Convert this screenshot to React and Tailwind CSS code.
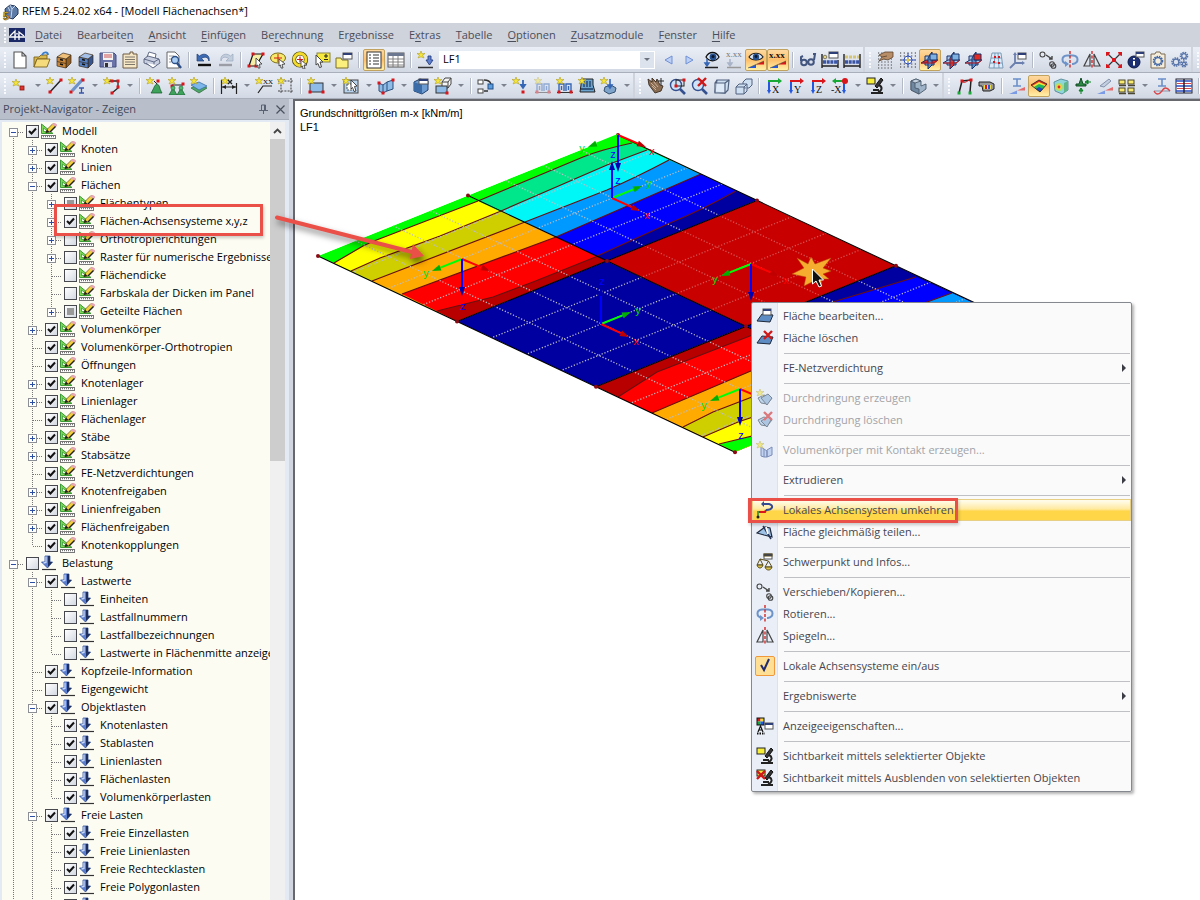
import { useState } from "react";

/* ---------- small drawing parts shared by the icons ---------- */

const Spark = ({ x = 4, y = 4 }) => (
  <g transform={`translate(${x} ${y})`}>
    <path d="M0-4L1-1.2L4-1.6L1.6.4L3 3L0 1.8L-3 3L-1.6.4L-4-1.6L-1-1.2Z" fill="#f4e63c" stroke="#b39d1c" strokeWidth=".6" />
  </g>
);

const Win = ({ x = 9, y = 1, w = 8, h = 6 }) => (
  <g>
    <rect x={x} y={y} width={w} height={h} fill="#fff" stroke="#555" strokeWidth="1" />
    <rect x={x} y={y} width={w} height="2" fill="#2f3f78" />
  </g>
);

const Dot = ({ x, y, c = "#d8161b" }) => <rect x={x - 1.5} y={y - 1.5} width="3" height="3" fill={c} />;

const Slab = () => <path d="M1 14L6 7L17 8L14 15Z" fill="#5d8cc4" stroke="#1f2a3c" strokeWidth="1" />;

const Gear = ({ x, y, r = 3, c = "#5572a8" }) => (
  <g fill="none" stroke={c}>
    <circle cx={x} cy={y} r={r} strokeWidth="1.6" strokeDasharray="1.5 .9" />
    <circle cx={x} cy={y} r={r - 1.2} strokeWidth="1.2" />
  </g>
);

const Planes = ({ hot }) => (
  <g stroke="#16306b" strokeWidth="1">
    <path d="M4 5H13V14H4Z" fill="#a9c9ea" />
    <path d="M0 12L5 9H17L13 12Z" fill={hot === "h" ? "#e22a22" : "#a9c9ea"} />
    <path d="M7 7L11 1V14L7 18Z" fill={hot === "s" ? "#e22a22" : "#4d88c9"} fillOpacity=".85" />
    <path d="M9 3H16V9H9Z" fill={hot === "v" ? "#e22a22" : "#7fb0e2"} />
    <path d="M0 12H13L17 9" stroke="#c81a1a" fill="none" />
  </g>
);

const Axis = ({ letter, flip }) => (
  <g>
    <path d={flip ? "M13 3V15" : "M4 3V15"} stroke="#2458e0" strokeWidth="2" />
    <path d={flip ? "M11 13L13 17L15 13Z" : "M2 13L4 17L6 13Z"} fill="#2458e0" />
    <path d="M3 4H15" stroke={flip || letter === "X" ? "#18a835" : "#d8161b"} strokeWidth="2" />
    <path d={flip ? "M5 1L1 4L5 7Z" : "M13 1L17 4L13 7Z"} fill={flip || letter === "X" ? "#18a835" : "#d8161b"} />
    {flip && <circle cx="14" cy="4" r="3" fill="#d8161b" />}
    <text x={flip ? 0 : 7} y="16" fontSize="10" fontFamily="Liberation Serif, serif" fill="#111">
      {flip ? "-X" : letter}
    </text>
  </g>
);

const Cabinet = ({ c, d, top }) => (
  <g stroke="#3b2a18" strokeWidth=".7">
    <path d="M11 8L16 4V12L11 17Z" fill={d} />
    <path d="M2 6L11 8V17L2 15Z" fill={c} />
    <path d="M2 6L8 2L16 4L11 8Z" fill={top} />
    <path d="M2 10.500L11 12.500" />
    <path d="M5 8.500L8 9.200M5 13L8 13.700" stroke="#111" strokeWidth="1.600" />
  </g>
);

const Scope = () => (
  <g>
    <rect x="1" y="1" width="8" height="6" fill="#f7ee3a" stroke="#222" />
    <path d="M15 1L9 9L11 11L17 3Z" fill="#333" stroke="#111" />
    <path d="M13 8C17 10 16 14 12 15M5 16H17M7 13H13" fill="none" stroke="#222" strokeWidth="2" />
  </g>
);

const LoadBlock = () => (
  <g>
    <path d="M3 14V7H8V14M10 14V7H15V14" fill="none" stroke="#3565b5" strokeWidth="1.4" />
    <path d="M5.500 9V13M12.500 9V13" stroke="#3565b5" strokeWidth="1.4" />
    <path d="M1 15.500H17" stroke="#333" />
    <Dot x={3} y={15} />
    <Dot x={15} y={15} />
    <Spark />
  </g>
);

const Cross = ({ x = 13, y = 5 }) => (
  <path d={`M${x - 4} ${y - 4}L${x + 4} ${y + 4}M${x + 4} ${y - 4}L${x - 4} ${y + 4}`} stroke="#d01818" strokeWidth="2.400" />
);

const Pyramid = ({ x, y }) => (
  <g>
    <path d={`M${x} ${y}L${x + 4} ${y + 7}H${x - 4}Z`} fill="#3da35a" stroke="#1d5f33" strokeWidth=".7" />
    <circle cx={x} cy={y} r="2" fill="#4fba6c" stroke="#1d5f33" strokeWidth=".6" />
  </g>
);

const icons = {
  newDoc: <path d="M3 1H11L15 5V17H3ZM11 1V5H15" fill="#fff" stroke="#555" strokeWidth="1.100" />,
  open: (
    <g stroke="#7a6320" strokeWidth=".9">
      <path d="M1 6H6L8 4H14V8H4L1 16Z" fill="#d9b84a" />
      <path d="M4 8H17L14 16H1Z" fill="#f6db7c" />
      <path d="M9 4C11 0 15 1 15 4" fill="none" stroke="#3a7ecb" strokeWidth="1.800" />
    </g>
  ),
  cabinetBrown: <Cabinet c="#c8873a" d="#8f5f24" top="#eec079" />,
  cabinetBlue: <Cabinet c="#5580c4" d="#345591" top="#a3bfe8" />,
  save: (
    <g>
      <path d="M1 2H15L17 4V16H1Z" fill="#6b74a8" stroke="#474e80" />
      <rect x="4" y="2" width="10" height="7" fill="#f3f3f3" />
      <path d="M5 4H13M5 6H13" stroke="#c44" strokeWidth=".9" />
      <rect x="5" y="11" width="8" height="5" fill="#d9dce8" />
      <rect x="6" y="12" width="3" height="4" fill="#333" />
    </g>
  ),
  list: (
    <g>
      <path d="M2 3H9V1H12V3H16V17H2Z" fill="#f5e6c6" stroke="#6d5b43" />
      <path d="M4 6H14M4 8.500H14M4 11H14M4 13.500H14" stroke="#6f6a60" strokeWidth=".9" />
    </g>
  ),
  print: (
    <g stroke="#555f7a" strokeWidth=".9">
      <path d="M4 6L6 1L13 3L12 8Z" fill="#fff" />
      <path d="M1 8L5 5L16 8L17 12L11 16L1 12Z" fill="#c8cfe0" />
      <path d="M1 8L11 11L16 8M11 11V16" fill="none" />
      <path d="M3 12L10 17L14 14" fill="#fff" />
    </g>
  ),
  preview: (
    <g>
      <path d="M2 1H10L14 5V17H2Z" fill="#fff" stroke="#666" />
      <path d="M4 5H9M4 8H6M4 11H6" stroke="#999" />
      <circle cx="10" cy="9" r="3.500" fill="#a9cdf3" stroke="#2b4f86" strokeWidth="1.300" />
      <path d="M12 12L16 17" stroke="#2b4f86" strokeWidth="2.400" />
    </g>
  ),
  undo: (
    <g>
      <path d="M2 3V10H9L6.500 7.500C10 5 13 6 14 10C15.500 4 9 1 4.500 5Z" fill="#3d6bb4" stroke="#203f77" strokeWidth=".7" />
      <path d="M3 14H16" stroke="#111" strokeWidth="2.400" />
    </g>
  ),
  redo: (
    <g>
      <path d="M16 3V10H9L11.500 7.500C8 5 5 6 4 10C2.500 4 9 1 13.500 5Z" fill="#c3cedd" stroke="#9aa9be" strokeWidth=".7" />
      <path d="M2 14H15" stroke="#9a9da5" strokeWidth="2.400" />
    </g>
  ),
  selPoly: (
    <g>
      <path d="M2 15L6 3H16L9 15Z" fill="#f5efa8" stroke="#111" strokeWidth="1.200" />
      <Dot x={6} y={3} />
      <Dot x={2} y={15} />
      <Dot x={16} y={3} />
      <Dot x={9} y={15} />
      <path d="M9 7L15 13L12.500 13L13 17L11 17L11 14L9 15Z" stroke="#444" fill="#fff" strokeWidth=".9" />
    </g>
  ),
  selEllipse: (
    <g>
      <ellipse cx="9" cy="7" rx="7.500" ry="5" fill="#f7e96b" stroke="#7a6a13" />
      <path d="M5 7H13M9 3V11" stroke="#d01818" />
      <path d="M10 8L16 13L13 13.500L14 17L12 17L11.500 14L10 15Z" fill="#fff" stroke="#444" strokeWidth=".9" />
    </g>
  ),
  selRing: (
    <g>
      <circle cx="9" cy="8.500" r="6" fill="#fff" stroke="#4a420c" strokeWidth="4.200" />
      <circle cx="9" cy="8.500" r="6" fill="none" stroke="#f3dc2d" strokeWidth="2.800" />
      <path d="M6 8.500H12M9 5.500V11.500" stroke="#d01818" strokeWidth="1.200" />
      <path d="M10 9L16 14L13 14L14 18L12 18L11.500 15L10 16Z" fill="#fff" stroke="#444" strokeWidth=".9" />
    </g>
  ),
  selWin: (
    <g>
      <rect x="4" y="2" width="13" height="9" fill="#f7ea3f" stroke="#8a8544" />
      <path d="M13 3V7M11 5H15M11 8.500H15" stroke="#222" />
      <path d="M3 4L10 11L7 11L8.500 16L6.500 16.500L5 12.500L3 14Z" fill="#fff" stroke="#444" />
    </g>
  ),
  folderWin: (
    <g>
      <path d="M1 7H6L7 9H13V17H1Z" fill="#fbf07e" stroke="#7b6f28" />
      <Win x={8} y={2} w={9} h={6} />
    </g>
  ),
  navTable: (
    <g>
      <rect x="2" y="1" width="14" height="16" fill="#fff" stroke="#333" />
      <path d="M4 4H6M8 4H14M4 7H6M8 7H14M4 10H6M8 10H14M4 13H6M8 13H14" stroke="#333" strokeWidth="1.200" />
    </g>
  ),
  grid: (
    <g>
      <rect x="1" y="2" width="16" height="14" fill="#fff" stroke="#555" />
      <rect x="1" y="2" width="16" height="3" fill="#6c7890" />
      <path d="M1 8H17M1 11H17M1 14H17M6 5V16M11 5V16" stroke="#777" strokeWidth=".9" />
    </g>
  ),
  newLoad: (
    <g>
      <Spark />
      <path d="M11 5H14V9H16L12.500 14L9 9H11Z" fill="#5f80cf" stroke="#27407f" strokeWidth=".9" />
      <path d="M1 16.500H16" stroke="#333" strokeWidth="1.500" />
    </g>
  ),
  prev: <path d="M13 5L6 9L13 13Z" fill="#bcd0f5" stroke="#6f90d6" />,
  next: <path d="M5 5L12 9L5 13Z" fill="#bcd0f5" stroke="#6f90d6" />,
  eyeLoad: (
    <g>
      <path d="M3 6C6 0 13 0 16 6C13 11 6 11 3 6Z" fill="#dbe8fa" stroke="#111" strokeWidth="1.300" />
      <circle cx="10" cy="6" r="3.400" fill="#24508f" />
      <circle cx="10" cy="5.500" r="1.500" fill="#0b1526" />
      <path d="M4 8V13M2 12L4 15L6 12Z" stroke="#3565b5" fill="#3565b5" strokeWidth="1.500" />
      <path d="M2 16.500H15" stroke="#222" strokeWidth="1.500" />
    </g>
  ),
  xxLoad: (
    <g>
      <text x="1" y="6" fontSize="9" fontFamily="Liberation Serif, serif" fill="#777">x.xx</text>
      <path d="M5 8V13M3 12L5 15L7 12Z" stroke="#a9b4c9" fill="#a9b4c9" strokeWidth="1.500" />
      <path d="M2 16.500H16" stroke="#999" strokeWidth="1.500" />
    </g>
  ),
  eyeRes: (
    <g>
      <path d="M2 6C5 1 13 1 16 6C13 10 5 10 2 6Z" fill="#dbe8fa" stroke="#222" strokeWidth="1.200" />
      <circle cx="9" cy="6" r="3.200" fill="#24508f" />
      <circle cx="9" cy="5.500" r="1.400" fill="#0b1526" />
      <path d="M1 17L9 13.500V17Z" fill="#2458e0" />
      <path d="M9 13.500L17 10V13.500Z" fill="#d8161b" />
      <path d="M1 17L17 10" stroke="#553" strokeWidth=".6" />
    </g>
  ),
  xxRes: (
    <g>
      <text x="0" y="7" fontSize="9" fontWeight="bold" fontFamily="Liberation Serif, serif" fill="#111">x.xx</text>
      <path d="M1 17L9 13.500V17Z" fill="#2458e0" />
      <path d="M9 13.500L17 10V13.500Z" fill="#d8161b" />
      <path d="M1 17L17 10" stroke="#553" strokeWidth=".6" />
    </g>
  ),
  glasses: (
    <g fill="none" stroke="#42557f" strokeWidth="2">
      <circle cx="5" cy="11.500" r="2.800" />
      <circle cx="12" cy="11" r="2.800" />
      <path d="M2 10L2 6L4 5M15 9L16 3L14 3M8 11H9" />
    </g>
  ),
  calcWin: (
    <g>
      <path d="M1 3V17M17 9V17M1 15H17" stroke="#222" strokeWidth="1.400" />
      <path d="M2 11H16" stroke="#3a55a8" strokeWidth="3.500" strokeDasharray="3 .7" />
      <circle cx="4" cy="6" r="1.800" fill="#e8d98a" stroke="#554" strokeWidth=".7" />
      <Win x={8} y={1} w={9} h={6} />
    </g>
  ),
  calc: (
    <g>
      <path d="M1 3V17M17 3V17M1 15H17" stroke="#222" strokeWidth="1.400" />
      <path d="M2 6H16" stroke="#d6c672" strokeWidth="3" strokeDasharray="3 1" />
      <path d="M2 11H16" stroke="#3a55a8" strokeWidth="3.500" strokeDasharray="3 .7" />
    </g>
  ),
  handGrid: (
    <g>
      <path d="M1 2H17M1 5H17M1 8H17M1 11H17M1 14H17M1 17H17" stroke="#444" strokeWidth="1.200" strokeDasharray="1.200 2" />
      <path d="M2 4L8 1L16 1V6L11 9L7 8L2 10L5 6Z" fill="#b88e68" stroke="#5a412b" strokeWidth=".8" />
      <path d="M5 6L10 5" stroke="#5a412b" strokeWidth=".8" />
    </g>
  ),
  snap: (
    <g>
      <path d="M1 2H17M1 5H17M1 13H17M1 16H17M1 9H17" stroke="#333" strokeWidth="1.200" strokeDasharray="1.200 2.500" />
      <circle cx="9" cy="9" r="4" fill="#fff" stroke="#3050b8" />
      <path d="M9 2V16M2 9H16" stroke="#3050b8" />
      <circle cx="9" cy="9" r="1.500" fill="#e6c92c" />
    </g>
  ),
  planeH: <Planes hot="h" />,
  planeS: <Planes hot="s" />,
  planeV: <Planes hot="v" />,
  meshRed: (
    <g>
      <path d="M2 17L5 2H14L16 17ZM3 12H15M4 7H15M8 2L7 17M11 2L12 17" fill="#dcebfa" stroke="#6f93b0" strokeWidth=".9" />
      <path d="M7 6H9M11 6H13M6 11H8M11 12H13" stroke="#d8161b" strokeWidth="2" />
    </g>
  ),
  axesWin: (
    <g>
      <path d="M6 3V12H14M6 12L1 17" fill="none" stroke="#6b7fae" strokeWidth="1.800" />
      <path d="M4 4L6 1L8 4ZM13 10L16 12L13 14Z" fill="#6b7fae" />
      <Win x={9} y={2} w={8} h={6} />
    </g>
  ),
  moveCopy: (
    <g fill="none" stroke="#444" strokeWidth="1.100">
      <circle cx="3.500" cy="3.500" r="2.500" />
      <path d="M7 4L13 8M13 5V8H10" strokeWidth="1.400" />
      <circle cx="13" cy="13" r="2.300" />
      <circle cx="14.500" cy="15" r="2.300" />
    </g>
  ),
  rotate: (
    <g>
      <path d="M6 13C0 12 0 5 6 4.500H12C18 5 18 12 12 13H11" fill="none" stroke="#6d93c8" strokeWidth="2" />
      <path d="M4 10L8 13L4 16Z" fill="#6d93c8" />
      <path d="M9 0V18" stroke="#d01818" strokeWidth="1.300" strokeDasharray="3 1.500" />
    </g>
  ),
  mirror: (
    <g>
      <path d="M7 3V15H1ZM11 3V15H17Z" fill="none" stroke="#444" strokeWidth="1.200" />
      <path d="M9 0V18" stroke="#d01818" strokeWidth="1.300" strokeDasharray="3 1.500" />
    </g>
  ),
  cross: (
    <g>
      <path d="M2 2L16 16M16 2L2 16" stroke="#333" strokeWidth="1.200" />
      <path d="M1 1H5L4 4L1 5ZM17 1H13L14 4L17 5ZM1 17H5L4 14L1 13ZM17 17H13L14 14L17 13Z" fill="#d8161b" />
      <path d="M7 7H11V11H7Z" fill="#d8161b" />
    </g>
  ),
  info: (
    <g>
      <circle cx="7" cy="11" r="6" fill="#1c2f73" stroke="#0d1a49" />
      <path d="M7 7V8.500M7 10V14.500" stroke="#fff" strokeWidth="2" />
      <Win x={9} y={1} w={8} h={5} />
    </g>
  ),
  gearBox: (
    <g>
      <path d="M2 3H6L7 1H11L12 3H16V17H2Z" fill="#f5eddc" stroke="#7a6b52" />
      <Gear x={9} y={10} r={4.5} c="#3f66a5" />
    </g>
  ),
  gears: (
    <g>
      <Gear x={5} y={11} r={4} />
      <Gear x={13} y={5} r={3.5} />
      <Gear x={13} y={13} r={2.8} />
    </g>
  ),
  node: (
    <g>
      <Spark x={5} y={6} />
      <rect x="9" y="9" width="4" height="4" fill="#e0332e" stroke="#8e1511" strokeWidth=".8" />
    </g>
  ),
  line: (
    <g>
      <path d="M4 15L15 3" stroke="#222" strokeWidth="1.400" />
      <Spark />
      <Dot x={4} y={15} />
      <Dot x={15} y={3} />
    </g>
  ),
  member: (
    <g>
      <path d="M4 14L15 2" stroke="#6d93c8" strokeWidth="3.200" />
      <Spark />
      <Dot x={3} y={15} />
      <Dot x={15} y={3} />
      <path d="M11 11H16M11 16H16M13.500 11V16" stroke="#3a55a8" strokeWidth="1.300" />
    </g>
  ),
  polyline: (
    <g>
      <path d="M5 4H15V11L9 16" fill="none" stroke="#222" strokeWidth="1.300" />
      <Spark />
      <Dot x={9} y={4} />
      <Dot x={15} y={4} />
      <Dot x={15} y={10} />
      <Dot x={9} y={16} />
    </g>
  ),
  support: (
    <g>
      <path d="M8 4L11 7" stroke="#222" />
      <path d="M11 7C14 8 13 11 16 16H5C8 12 8 8 11 7Z" fill="#3da35a" stroke="#1d5f33" strokeWidth=".8" />
      <Spark />
      <Dot x={12} y={4} />
    </g>
  ),
  supports: (
    <g>
      <path d="M4 8H15" stroke="#222" />
      <Spark />
      <Dot x={4} y={9} />
      <Dot x={15} y={7} />
      <Pyramid x={5} y={11} />
      <Pyramid x={13} y={11} />
    </g>
  ),
  foundation: (
    <g>
      <path d="M1 11L9 7L17 11L9 16Z" fill="#4ea767" stroke="#266639" strokeWidth=".7" />
      <path d="M1 8L9 5L17 9L9 13Z" fill="#7cb6ea" stroke="#33649a" strokeWidth=".7" />
      <Spark />
    </g>
  ),
  dimension: (
    <g>
      <path d="M1.500 3V17M16.500 6V17M2 10H16" stroke="#222" strokeWidth="1.200" />
      <path d="M2 10L6 8V12ZM16 10L12 8V12Z" fill="#222" />
      <Spark x={5} y={4} />
      <path d="M8 3L12 7M12 3L8 7" stroke="#222" strokeWidth="1.300" />
    </g>
  ),
  comment: (
    <g>
      <path d="M3 16L8 9H17" fill="none" stroke="#222" strokeWidth="1.200" />
      <text x="8" y="7" fontSize="7" fontFamily="Liberation Serif, serif">XX</text>
      <Spark />
    </g>
  ),
  guide: (
    <g>
      <path d="M4 1V17M14 1V17M1 4H17M1 14H17" stroke="#444" strokeWidth="1.100" strokeDasharray="2 1.200" />
      <Spark />
    </g>
  ),
  surface: (
    <g>
      <rect x="3" y="6" width="13" height="9" fill="#8ebbe8" stroke="#333" />
      <Spark />
      <Dot x={3} y={15} />
      <Dot x={16} y={15} />
    </g>
  ),
  opening: (
    <g>
      <rect x="2" y="3" width="14" height="13" fill="#b9d4ef" stroke="#444" />
      <rect x="5" y="7" width="7" height="6" fill="#fff" stroke="#555" strokeDasharray="2 1" />
      <Spark />
      <path d="M9 3L15 9L12.500 9.500L14 14L12 14.500L10.500 10.500L9 12Z" fill="#fff" stroke="#333" strokeWidth=".9" />
    </g>
  ),
  fold: (
    <g>
      <path d="M2 6L6 8L10 5L16 3V12L10 14L6 16L2 14Z" fill="#8ebbe8" stroke="#2c4e7d" />
      <path d="M6 8V16M10 5V14" stroke="#2c4e7d" />
      <Dot x={2} y={6} />
      <Dot x={16} y={3} />
      <Dot x={6} y={16} />
    </g>
  ),
  solid: (
    <g>
      <path d="M2 5L8 2L16 4V13L10 17L2 14Z" fill="#6b9bd0" stroke="#22406c" />
      <path d="M2 5L10 8V17L2 14Z" fill="#3c6ca8" />
      <Win x={7} y={2} w={9} h={5} />
    </g>
  ),
  cubes: (
    <g>
      <path d="M8 5L11 1H17V7L14 11H8Z" fill="#f5f5f5" stroke="#444" />
      <path d="M8 5H14V11M14 5L17 1" fill="none" stroke="#444" />
      <rect x="2" y="9" width="11" height="7" fill="#8ebbe8" stroke="#333" />
      <Spark />
      <Dot x={13} y={16} />
    </g>
  ),
  connect: (
    <g>
      <rect x="1" y="3" width="5" height="4" fill="#fff" stroke="#444" />
      <rect x="1" y="12" width="5" height="4" fill="#fff" stroke="#444" />
      <path d="M7 3C11 3 13 4 14 7M7 14H11" fill="none" stroke="#333" strokeWidth="1.300" />
      <rect x="11" y="7" width="5" height="5" fill="#5b9ee0" stroke="#234e86" />
    </g>
  ),
  nodeLoad: (
    <g>
      <Spark />
      <path d="M11 3V8M9 8L11 11L13 8Z" fill="#3565b5" stroke="#3565b5" strokeWidth="1.800" />
      <Dot x={11} y={15} />
    </g>
  ),
  lineLoadOff: (
    <g opacity=".45">
      <LoadBlock />
    </g>
  ),
  lineLoad: <LoadBlock />,
  areaLoad: (
    <g>
      <path d="M3 2H15V8L17 15H2L3 8Z" fill="#6ba4cf" stroke="#222" />
      <path d="M6 4V10M9 4V10M12 4V10M3 12H15" stroke="#1f3c66" strokeWidth="1.300" />
      <Spark />
    </g>
  ),
  solidLoad: (
    <g>
      <path d="M5 10L11 8L16 11L15 15L9 17L4 14Z" fill="#7fa4cc" stroke="#34506f" />
      <path d="M10 2V8M8 8L10 11L12 8Z" fill="#3565b5" stroke="#3565b5" strokeWidth="1.600" />
      <Spark />
    </g>
  ),
  pan: (
    <g>
      <path d="M1 2L5 5L5 1L9 5L10 2L13 8L16 9L14 14L8 16L5 12L2 8Z" fill="#8a6c52" stroke="#3a2b20" strokeWidth=".9" />
      <path d="M4 6L9 11M7 5L11 10M5 9L9 13" stroke="#d9c2ab" strokeWidth=".8" />
      <path d="M14 1V8M11 4H17" stroke="#222" />
    </g>
  ),
  zoomWin: (
    <g>
      <circle cx="7" cy="8" r="5.500" fill="#cfe3f8" stroke="#34508f" strokeWidth="1.400" />
      <rect x="7" y="3" width="8" height="6" fill="none" stroke="#222" />
      <Dot x={15} y={3} />
      <Dot x={7} y={9} />
      <path d="M11 12L16 17" stroke="#34508f" strokeWidth="2.600" />
    </g>
  ),
  zoomX: (
    <g>
      <circle cx="7" cy="8" r="5.500" fill="#cfe3f8" stroke="#34508f" strokeWidth="1.400" />
      <path d="M11 12L16 17" stroke="#34508f" strokeWidth="2.600" />
      <Cross x={11} y={5} />
    </g>
  ),
  cube: (
    <g stroke="#50617e" strokeWidth="1.200" fill="#cfe0f3">
      <path d="M2 15L4 3H16L15 13L12 16Z" />
      <path d="M2 6H12V16H2ZM12 6L16 3M2 6L4 3" fill="#e4eefa" fillOpacity=".7" />
    </g>
  ),
  multiCube: (
    <g fill="#cfe0f3" stroke="#50617e">
      <path d="M8 5L11 2H17V8L14 11H8Z" />
      <path d="M1 10H9V17H1ZM1 10L4 7H12L9 10M12 7V14L9 17" />
    </g>
  ),
  axX: <Axis letter="X" />,
  axY: <Axis letter="Y" />,
  axZ: <Axis letter="Z" />,
  axMX: <Axis flip />,
  scope: <Scope />,
  solidGray: (
    <g stroke="#4b5a6b" strokeWidth=".9">
      <path d="M2 4L7 2L12 4V9L17 7V12L10 17L2 13Z" fill="#9fb3c8" />
      <path d="M2 4L6 6V11L10 12V17L2 13Z" fill="#6f879f" />
      <path d="M7 2L12 4L6 6L2 4Z" fill="#c5d3e0" />
    </g>
  ),
  frame: (
    <g>
      <path d="M3 16L6 4L15 3L14 15" fill="none" stroke="#222" strokeWidth="1.500" />
      <path d="M6 4C9 8 12 2 15 3" fill="none" stroke="#d8161b" />
      <Dot x={6} y={4} />
      <Dot x={15} y={3} />
      <Dot x={3} y={16} c="#18a835" />
      <Dot x={14} y={16} c="#18a835" />
    </g>
  ),
  machine: (
    <g>
      <path d="M1 5H12L16 7V12L12 14H5L4 9H1Z" fill="#999" stroke="#222" />
      <rect x="6" y="8" width="7" height="4" fill="#f1df3c" />
      <path d="M8 8V12" stroke="#d8161b" strokeWidth="2" />
      <path d="M11 8V12" stroke="#2458e0" strokeWidth="2" />
    </g>
  ),
  beamRes: (
    <g>
      <path d="M5 2H13M5 9H13M9 2V9" stroke="#6b8fc9" strokeWidth="1.600" />
      <path d="M1 17L9 13.500V17Z" fill="#7c9be6" />
      <path d="M9 13.500L17 10V13.500Z" fill="#e56a6a" />
    </g>
  ),
  colorSurf: (
    <g>
      <path d="M1 8L9 3L17 7L10 15Z" fill="#e22a22" />
      <path d="M2 9L9 5L16 8L10 15Z" fill="#f3e13a" />
      <path d="M4 10L9 7L15 9L10 15Z" fill="#21b85a" />
      <path d="M6 12L9 10L13 12L10 15Z" fill="#1c46c8" />
      <path d="M1 8L9 3L17 7L10 15Z" fill="none" stroke="#222" strokeWidth=".8" />
    </g>
  ),
  colorSolid: (
    <g>
      <path d="M2 5L9 2L16 4V13L10 17L3 14Z" fill="#8fd6dc" stroke="#4a7d8f" strokeWidth=".8" />
      <path d="M12 6L16 4V13L12 16Z" fill="#5fb48a" />
      <circle cx="7" cy="10" r="4" fill="#a6e078" />
      <circle cx="7" cy="10" r="2.700" fill="#f3cf4a" />
      <circle cx="7" cy="10" r="1.400" fill="#e22a22" />
    </g>
  ),
  reactions: (
    <g>
      <path d="M7 1L9 7H12V9H2V7H5Z" fill="#2c8a45" stroke="#154d26" />
      <path d="M17 5H13M14 3L11 5L14 7ZM7 17V14M5 14L7 11L9 14Z" fill="#18a835" stroke="#0d7a24" />
    </g>
  ),
  sections: (
    <g>
      <path d="M4 9L13 2L15 4L8 10Z" fill="#c3cede" stroke="#8593ab" />
      <path d="M1 17L9 13.500V17Z" fill="#7c9be6" />
      <path d="M9 13.500L17 10V13.500Z" fill="#e56a6a" />
    </g>
  ),
  windows: (
    <g fill="#f7ea6c" stroke="#4a4630">
      <rect x="1" y="3" width="6" height="4" />
      <rect x="10" y="3" width="6" height="4" />
      <rect x="1" y="11" width="6" height="4" />
      <rect x="10" y="11" width="6" height="4" />
      <path d="M1 8.500H8M10 8.500H17M1 16.500H8M10 16.500H17" strokeWidth="1.400" />
    </g>
  ),
  waveRes: (
    <g>
      <path d="M5 2H13M5 9H13M9 2V9" stroke="#6b8fc9" strokeWidth="1.600" />
      <path d="M1 14H17" stroke="#8a94a8" />
      <path d="M1 14C3 18 6 18 9 14C11 10 14 10 17 14" fill="none" stroke="#d8464a" strokeWidth="1.300" />
    </g>
  ),
  layers: (
    <g>
      <rect x="1" y="2" width="16" height="14" fill="#fff" stroke="#223" />
      <path d="M1 4H17M1 9H17M1 14H17" stroke="#2b4fc0" strokeWidth="1.600" />
      <path d="M2 6.500H16M2 11.500H16" stroke="#d8464a" strokeWidth="1.200" />
      <path d="M9 2V16" stroke="#223" strokeWidth="1.500" />
    </g>
  ),
  editSurf: (
    <g>
      <Slab />
      <Win x={7} y={2} w={8} h={6} />
    </g>
  ),
  delSurf: (
    <g>
      <Slab />
      <Cross x={12} y={6} />
    </g>
  ),
  interNew: (
    <g opacity=".55">
      <path d="M2 9L8 6L16 9L11 15L5 14Z" fill="#9fc3e6" stroke="#234" />
      <path d="M5 9L12 5L16 9L11 16Z" fill="#7ba6d2" stroke="#234" />
      <Spark />
    </g>
  ),
  interDel: (
    <g opacity=".55">
      <path d="M2 9L8 6L16 9L11 15L5 14Z" fill="#9fc3e6" stroke="#234" />
      <path d="M5 10L12 6L15 9L11 16Z" fill="#7ba6d2" stroke="#234" />
      <Cross x={12} y={5} />
    </g>
  ),
  contact: (
    <g opacity=".6">
      <path d="M5 6L8 8V16L5 15ZM8 8L11 10V16H8M11 9L16 6V14L11 16Z" fill="#a9c2f0" stroke="#334a8c" />
      <Spark />
    </g>
  ),
  flip: (
    <g>
      <path d="M2 16V11H5" fill="none" stroke="#3f9a3c" strokeWidth="1.800" />
      <path d="M3 11H9L10 9" stroke="#d8161b" strokeWidth="2" fill="none" />
      <path d="M7 3H13C18 4 17 9 10 9" fill="none" stroke="#33488f" strokeWidth="2" />
      <path d="M8 0L5 3L8 6Z" fill="#33488f" />
      <circle cx="2" cy="16" r="1.500" fill="#222" />
    </g>
  ),
  divide: (
    <g>
      <path d="M1 10L9 4L14 5L16 14L8 12Z" fill="#9fc3e6" stroke="#1f2a3c" strokeWidth="1.200" />
      <path d="M7 3L15 16" stroke="#26355c" strokeWidth="1.500" />
      <path d="M10 4L12 11" stroke="#fff" strokeWidth="1.800" />
    </g>
  ),
  scales: (
    <g fill="none" stroke="#5a4c18">
      <path d="M1 12H7L4 6ZM9 14H16L12.500 8ZM4 6L12.500 8" />
      <path d="M1 12C2 16 6 16 7 12ZM9 14C10 18 15 18 16 14Z" fill="#d8c04a" />
      <Win x={8} y={1} w={8} h={5} />
    </g>
  ),
  tick: <path d="M5 8L8 13L13 2" fill="none" stroke="#222c6e" strokeWidth="2" />,
  display: (
    <g>
      <rect x="1" y="1" width="3.500" height="3.500" fill="#d8161b" />
      <rect x="4.500" y="1" width="3.500" height="3.500" fill="#f3dc2d" />
      <rect x="1" y="4.500" width="3.500" height="3.500" fill="#18a835" />
      <rect x="4.500" y="4.500" width="3.500" height="3.500" fill="#2458e0" />
      <rect x="1" y="1" width="7" height="7" fill="none" stroke="#111" />
      <path d="M2 15L4.500 9L7 15M3 13H6" fill="none" stroke="#111" strokeWidth="1.200" />
      <path d="M1 16.500H9" stroke="#111" strokeWidth="1.800" strokeDasharray="1.500 1" />
      <Win x={9} y={6} w={8} h={6} />
    </g>
  ),
  scopeDel: (
    <g>
      <Scope />
      <Cross x={5} y={6} />
    </g>
  ),
};

const Icon = ({ name }) => (
  <svg viewBox="0 0 18 18" className="w-[18px] h-[18px] shrink-0" aria-hidden="true">
    {icons[name]}
  </svg>
);

/* ---------- menu bar ---------- */

// [before, underlined letter, after]
const menus = [
  ["", "D", "atei"],
  ["Bearbeite", "n", ""],
  ["", "A", "nsicht"],
  ["", "E", "infügen"],
  ["Be", "r", "echnung"],
  ["Er", "g", "ebnisse"],
  ["E", "x", "tras"],
  ["", "T", "abelle"],
  ["", "O", "ptionen"],
  ["", "Z", "usatzmodule"],
  ["", "F", "enster"],
  ["", "H", "ilfe"],
];

const Grip = () => (
  <span className="w-[9px] shrink-0 flex justify-center">
    <span className="h-4 border-l-2 border-dotted border-[#f8fafd]" />
  </span>
);

const Logo = () => (
  <svg viewBox="0 0 18 18" className="w-[18px] h-[18px] shrink-0" aria-hidden="true">
    <path d="M3 6L8 2L13 3L16 6V11L11 16L4 14Z" fill="#5c7ba6" stroke="#25395c" />
    <path d="M8 2L10 6L9 15M10 6L13 3M6 4L8 8" stroke="#c6d5ea" fill="none" />
    <text x="1" y="17" fontSize="11" fontWeight="bold" fontFamily="Liberation Sans, sans-serif" fill="#f0bd2c" stroke="#4e3b08" strokeWidth=".5">
      5
    </text>
  </svg>
);

const BridgeLogo = () => (
  <svg viewBox="0 0 16 14" className="w-4 h-3.5 shrink-0" aria-hidden="true">
    <rect width="16" height="14" fill="#1b2a66" />
    <path d="M1 8L6 3V12M10 12V4L15 8" stroke="#fff" strokeWidth="1.300" fill="none" />
    <path d="M0 9H16" stroke="#fff" strokeWidth="1.500" />
    <path d="M6 8L8 5L10 8" stroke="#fff" strokeWidth=".8" fill="none" />
  </svg>
);

const MenuBar = () => (
  <nav className="h-6 shrink-0 flex items-center bg-[#cfd3dc] text-[11px] text-[#4a4d5a]">
    <Grip />
    <BridgeLogo />
    <div className="flex items-center gap-[15px] ml-2.5">
      {menus.map(([a, u, b]) => (
        <button key={a + u + b} type="button" className="whitespace-nowrap">
          {a}
          <u className="underline-offset-2">{u}</u>
          {b}
        </button>
      ))}
    </div>
  </nav>
);

/* ---------- tool bars ---------- */

// "|" separator, "v" drop-down arrow, "/" start of the next bar, "*" prefix = pressed
const row1a = "newDoc open cabinetBrown cabinetBlue save list print preview | undo redo | selPoly selEllipse selRing selWin folderWin | *navTable grid | newLoad".split(" ");
const row1b = "prev next eyeLoad xxLoad *eyeRes *xxRes | glasses calcWin calc / handGrid snap *planeH planeS planeV meshRed axesWin | moveCopy rotate mirror cross info gearBox gears /".split(" ");
const row2 = "node v line member v polyline v | support supports foundation | dimension v comment guide | surface v opening v fold v solid cubes v | connect v nodeLoad lineLoadOff lineLoad areaLoad solidLoad v / pan zoomWin zoomX cube multiCube | axX axY axZ axMX v scope v | solidGray v / frame machine | beamRes *colorSurf colorSolid reactions sections windows v waveRes layers |".split(" ");

const Tools = ({ items }) =>
  items.map((item, i) => {
    if (item === "|")
      return (
        <span key={i} className="w-2 shrink-0 flex justify-center">
          <span className="h-4 w-px bg-[#b4bac6] border-r border-white box-content" />
        </span>
      );
    if (item === "v")
      return (
        <button key={i} type="button" aria-label="Mehr" className="w-[13px] shrink-0 flex justify-center items-center">
          <span className="border-x-3 border-t-3 border-x-transparent border-t-[#7d828e]" />
        </button>
      );
    if (item === "/")
      return (
        <span key={i} className="w-3 h-full shrink-0 flex items-center border-l-2 border-[#cfd3dc]">
          <Grip />
        </span>
      );
    const on = item[0] === "*";
    return (
      <button
        key={i}
        type="button"
        aria-label={on ? item.slice(1) : item}
        className={`w-[22px] h-[22px] shrink-0 flex items-center justify-center ${
          on ? "border border-[#c2a25f] rounded-[2px] bg-linear-to-b from-[#fdd9a0] via-[#fdbf6a] to-[#fff0a8]" : ""
        }`}
      >
        <Icon name={on ? item.slice(1) : item} />
      </button>
    );
  });

const Bar = ({ children }) => (
  <div className="h-[26px] shrink-0 flex items-center overflow-hidden border-b border-[#a9afbb] bg-linear-to-b from-[#eaeff7] to-[#d3d9e4]">
    <Grip />
    {children}
  </div>
);

/* ---------- project navigator ---------- */

// level, label, state (1 on, 0 off, 2 partly), expander ("+", "-" or none)
const model = [
  [0, "Modell", 1, "-"],
  [1, "Knoten", 1, "+"],
  [1, "Linien", 1, "+"],
  [1, "Flächen", 1, "-"],
  [2, "Flächentypen", 2, "+"],
  [2, "Flächen-Achsensysteme x,y,z", 1, "+"],
  [2, "Orthotropierichtungen", 0, "+"],
  [2, "Raster für numerische Ergebnisse", 0, "+"],
  [2, "Flächendicke", 0],
  [2, "Farbskala der Dicken im Panel", 0],
  [2, "Geteilte Flächen", 2, "+"],
  [1, "Volumenkörper", 1, "+"],
  [1, "Volumenkörper-Orthotropien", 1],
  [1, "Öffnungen", 1],
  [1, "Knotenlager", 1, "+"],
  [1, "Linienlager", 1, "+"],
  [1, "Flächenlager", 1],
  [1, "Stäbe", 1, "+"],
  [1, "Stabsätze", 1, "+"],
  [1, "FE-Netzverdichtungen", 1],
  [1, "Knotenfreigaben", 1, "+"],
  [1, "Linienfreigaben", 1, "+"],
  [1, "Flächenfreigaben", 1, "+"],
  [1, "Knotenkopplungen", 1],
];

const loads = [
  [0, "Belastung", 0, "-"],
  [1, "Lastwerte", 1, "-"],
  [2, "Einheiten", 0],
  [2, "Lastfallnummern", 0],
  [2, "Lastfallbezeichnungen", 0],
  [2, "Lastwerte in Flächenmitte anzeigen", 0],
  [1, "Kopfzeile-Information", 1],
  [1, "Eigengewicht", 0],
  [1, "Objektlasten", 1, "-"],
  [2, "Knotenlasten", 1],
  [2, "Stablasten", 1],
  [2, "Linienlasten", 1],
  [2, "Flächenlasten", 1],
  [2, "Volumenkörperlasten", 1],
  [1, "Freie Lasten", 1, "-"],
  [2, "Freie Einzellasten", 1],
  [2, "Freie Linienlasten", 1],
  [2, "Freie Rechtecklasten", 1],
  [2, "Freie Polygonlasten", 1],
  [2, "Freie Kreislasten", 1],
];

const tree = [
  ...model.map((r) => ({ level: r[0], label: r[1], state: r[2], exp: r[3], kind: "model" })),
  ...loads.map((r) => ({ level: r[0], label: r[1], state: r[2], exp: r[3], kind: "load" })),
];

// does the guide line of this level go on below row i?
const goesOn = (i, level) => {
  for (let k = i + 1; k < tree.length; k++) {
    if (tree[k].level < level) return false;
    if (tree[k].level === level) return true;
  }
  // the list goes on past the lower edge
  return true;
};

const Guide = ({ up, down, across, exp }) => (
  <svg viewBox="0 0 22 18" className="w-[22px] h-[18px] shrink-0 -mr-[3px]" shapeRendering="crispEdges" aria-hidden="true">
    {up && <path d="M9.500 0V10" stroke="#777" strokeDasharray="1 1" />}
    {down && <path d="M9.500 10V18" stroke="#777" strokeDasharray="1 1" />}
    {across && <path d="M10 10.500H20" stroke="#777" strokeDasharray="1 1" />}
    {exp && (
      <g>
        <rect x="5.500" y="6.500" width="8" height="8" fill="#fff" stroke="#8c8f96" />
        <path d="M7 10.500H12" stroke="#2c4fa3" />
        {exp === "+" && <path d="M9.500 8V13" stroke="#2c4fa3" />}
      </g>
    )}
  </svg>
);

const RulerIcon = () => (
  <svg viewBox="0 0 16 16" className="w-4 h-4 shrink-0" aria-hidden="true">
    <path d="M.5 1V10.500H12Z" fill="#7ed957" stroke="#3a9a36" />
    <path d="M2.500 5V8.500H7Z" fill="#fff" stroke="#3a9a36" strokeWidth=".8" />
    <path d="M5 9.500L6.500 6L12 .5L15.500 2.500L9 9Z" fill="#f2cf3c" stroke="#5c4610" strokeWidth=".7" />
    <path d="M11 1.500L12.500 0H14L16 1.500V3L14.500 4Z" fill="#e7a7b4" />
    <path d="M9 9L14.500 3.500" stroke="#222" strokeWidth="1.400" />
    <path d="M4.500 10L6 6.500L8.500 9Z" fill="#222" />
    <rect x=".5" y="12.500" width="14" height="3" fill="#fff" stroke="#777" />
    <path d="M2 13.500H14" stroke="#777" strokeWidth="1.400" strokeDasharray="1 1" />
  </svg>
);

const LoadIcon = () => (
  <svg viewBox="0 0 16 16" className="w-4 h-4 shrink-0" aria-hidden="true">
    <path d="M4 1H9V7H11.500L6.500 13L.5 7H4Z" fill="#5b7ed0" stroke="#31509c" strokeWidth=".8" />
    <path d="M5 1.500V7.500L2.500 8" stroke="#c9d8f8" strokeWidth="1.300" fill="none" />
    <path d="M7 1H9V7H11.500L7 12Z" fill="#1e2f5e" />
    <path d="M1 14.500H15" stroke="#333" strokeWidth="1.200" />
  </svg>
);

const Tick = () => (
  <svg viewBox="0 0 13 13" className="w-[13px] h-[13px] pointer-events-none [grid-area:1/1] hidden peer-checked:block" aria-hidden="true">
    <path d="M3 6L5.500 8.500L10 3.500" fill="none" stroke="#111" strokeWidth="2" />
  </svg>
);

const TreeRow = ({ row, index, on, onToggle }) => (
  <li className="h-[18px] flex items-center relative">
    {Array.from({ length: row.level + 1 }, (_, lv) => (
      <Guide
        key={lv}
        up={lv < row.level ? goesOn(index, lv) : index > 0}
        down={goesOn(index, lv)}
        across={lv === row.level}
        exp={lv === row.level && row.exp}
      />
    ))}
    <label className="flex items-center ml-[3px] whitespace-nowrap">
      <span className="grid">
        <input
          type="checkbox"
          checked={on}
          onChange={onToggle}
          className="peer appearance-none w-[13px] h-[13px] border border-[#46484e] bg-linear-to-br from-white to-[#d4d9e2] [grid-area:1/1]"
        />
        <Tick />
        {row.state === 2 && <span className="w-[7px] h-[7px] m-[3px] bg-[#999] [grid-area:1/1] pointer-events-none" />}
      </span>
      <span className="ml-0.5 mr-[5px]">{row.kind === "model" ? <RulerIcon /> : <LoadIcon />}</span>
      {row.label}
    </label>
    {row.label.startsWith("Flächen-Achs") && (
      <span className="absolute z-10 left-[50px] -top-2 w-[209px] h-8 border-3 border-[#ea4f48] shadow-[1px_2px_3px_rgba(0,0,0,0.2)] pointer-events-none" />
    )}
  </li>
);

const Navigator = () => {
  const [checked, setChecked] = useState(tree.map((r) => r.state === 1));
  const toggle = (i) => setChecked(checked.map((c, k) => (k === i ? !c : c)));

  return (
    <aside className="w-[289px] shrink-0 flex flex-col bg-[#e4eaf4]">
      <header className="h-[21px] shrink-0 flex items-center pl-[3px] pr-1 gap-2 bg-[#b9bfca] border-b border-[#a4abb8] text-[11px] text-[#3f4a5c]">
        <h2 className="flex-1">Projekt-Navigator - Zeigen</h2>
        <button type="button" aria-label="Anheften">
          <svg viewBox="0 0 9 10" className="w-[9px] h-2.5" fill="none" stroke="#5a6272">
            <path d="M2.500 6V1H6.500V6M5.500 1V6M0 6.500H9M4.500 6.500V10" />
          </svg>
        </button>
        <button type="button" aria-label="Schließen">
          <svg viewBox="0 0 9 9" className="w-[9px] h-[9px]" stroke="#4a5260" strokeWidth="1.200">
            <path d="M.5.5L8.500 8.500M8.500.5L.5 8.500" />
          </svg>
        </button>
      </header>
      <div className="flex-1 min-h-0 flex mt-0.5 ml-0.5 mr-1">
        <ul className="flex-1 min-w-0 overflow-hidden bg-[#fcfcf3] pl-0.5 text-[11px] text-black">
          {tree.map((row, i) => (
            <TreeRow key={row.label} row={row} index={i} on={checked[i]} onToggle={() => toggle(i)} />
          ))}
        </ul>
        <div className="w-[15px] shrink-0 bg-[#f0f0f0]">
          <button type="button" aria-label="Nach oben" className="w-full h-[17px] flex items-center justify-center">
            <svg viewBox="0 0 9 6" className="w-[9px] h-1.5" fill="none" stroke="#444" strokeWidth="1.800">
              <path d="M1 5L4.500 1.500L8 5" />
            </svg>
          </button>
          <div className="h-[322px] bg-[#cdcdcd]" />
        </div>
      </div>
    </aside>
  );
};

/* ---------- model view ---------- */

// corner of the mesh: i steps to the lower right, j steps to the lower left
const pt = (i, j) => [618 + 139 * i - 150 * j, 135 + 65.4 * i + 60.5 * j];
const seg = (i1, j1, i2, j2) => `M${pt(i1, j1)}L${pt(i2, j2)}`;

// painted from the first band to the last, each one covers the rest of its field
const fields = [
  {
    clip: [[0, 0], [1, 0], [1, 1], [0, 1]],
    base: "#00ff00",
    bands: [
      ["#00e68a", "M478 201L583 157Q600 150 632 143", "L757 200L607 261Z"],
      ["#00f7f7", "M501 211L607 165L647 150", "L757 200L607 261Z"],
      ["#0099ff", "M525 222L607 190Q635 178 669 160", "L757 200L607 261Z"],
      ["#0000ff", "M556 237L701 174", "L757 200L607 261Z"],
      ["#0000a0", "M595 257L670 223Q700 211 736 191", "L757 200L607 261Z"],
    ],
  },
  {
    clip: [[0, 1], [1, 1], [1, 2], [0, 2]],
    base: "#00ff00",
    bands: [
      ["#ffff00", "M334 263L363 246L374 241L478 201", "L607 261L457 321Z"],
      ["#cfcf00", "M351 271L380 258L440 236L501 211", "L607 261L457 321Z"],
      ["#ffaa00", "M372 281L525 222", "L607 261L457 321Z"],
      ["#ff0000", "M402 294L556 237", "L607 261L457 321Z"],
      ["#b80000", "M437 311L493 297L533 282L598 256", "L607 261L457 321Z"],
    ],
  },
  { clip: [[1, 0], [2, 0], [2, 1], [1, 1]], base: "#c80000", bands: [] },
  { clip: [[1, 1], [2, 1], [2, 2], [1, 2]], base: "#0000a0", bands: [] },
  {
    clip: [[2, 0], [3, 0], [3, 1], [2, 1]],
    base: "#0000a0",
    bands: [
      ["#0000ff", "M766 330L833 302L916 277", "L1035 331L885 391Z"],
      ["#0099ff", "M802 352L927 302L952 293", "L1035 331L885 391Z"],
    ],
  },
  {
    clip: [[2, 1], [3, 1], [3, 2], [2, 2]],
    base: "#b80000",
    bands: [
      ["#ff0000", "M618 397L657 372L755 334", "L885 391L735 452Z"],
      ["#ffaa00", "M652 413L765 365", "L885 391L735 452Z"],
      ["#cfcf00", "M683 427L713 412L765 392", "L885 391L735 452Z"],
      ["#ffff00", "M703 437L738 422L765 413", "L885 391L735 452Z"],
      ["#00ff00", "M719 444L765 433", "L885 391L735 452Z"],
    ],
  },
];

const quarters = [0.25, 0.5, 0.75];

const Arrow = ({ x, y, dx, dy, c, head }) => {
  const len = Math.hypot(dx, dy);
  const ux = dx / len;
  const uy = dy / len;
  const bx = x + dx - ux * 9;
  const by = y + dy - uy * 9;
  return (
    <g>
      <path d={`M${x} ${y}L${bx} ${by}`} stroke={c} strokeWidth="2" />
      <path d={`M${x + dx} ${y + dy}L${bx - uy * 3} ${by + ux * 3}L${bx + uy * 3} ${by - ux * 3}Z`} fill={head} />
    </g>
  );
};

// direction pairs: normal system points its z axis down, turned one up
const down = { x: [28, 12], y: [-30, 12], z: [0, 37] };
const up = { x: [28, 13], y: [30, -12], z: [0, -37] };

const Triad = ({ x, y, dir, labels }) => (
  <g>
    <Arrow x={x} y={y} dx={dir.y[0]} dy={dir.y[1]} c="#00ff00" head="#00b000" />
    <Arrow x={x} y={y} dx={dir.x[0]} dy={dir.x[1]} c="#ff0000" head="#c00000" />
    <Arrow x={x} y={y} dx={dir.z[0]} dy={dir.z[1]} c="#0000ff" head="#0000b0" />
    <g fontFamily="Liberation Sans, sans-serif" fontSize="11" textAnchor="middle">
      {labels.x && <text x={labels.x[0]} y={labels.x[1]} fill="#ff0000">x</text>}
      {labels.y && <text x={labels.y[0]} y={labels.y[1]} fill="#00dd00">y</text>}
      {labels.z && <text x={labels.z[0]} y={labels.z[1]} fill="#0000ff">z</text>}
    </g>
  </g>
);

const ModelView = () => (
  <svg viewBox="295 101 905 800" className="w-[905px] h-[800px] shrink-0" role="img" aria-label="Modell">
    <defs>
      {fields.map((f, i) => (
        <clipPath key={i} id={`field${i}`}>
          <polygon points={f.clip.map(([a, b]) => pt(a, b)).join(" ")} />
        </clipPath>
      ))}
    </defs>
    {fields.map((f, i) => (
      <g key={i} clipPath={`url(#field${i})`}>
        <polygon points={f.clip.map(([a, b]) => pt(a, b)).join(" ")} fill={f.base} />
        {f.bands.map(([color, edge, rest]) => (
          <g key={color}>
            <path d={edge + rest} fill={color} />
            <path d={edge} fill="none" stroke="#6b1010" strokeWidth="1.200" />
          </g>
        ))}
      </g>
    ))}
    <g fill="none" stroke="#bcbcc4" strokeDasharray="1.200 1.800" strokeWidth="1.300">
      {[0, 1, 2].map((i) => quarters.map((q) => <path key={i + q} d={seg(i + q, i === 1 ? 1 : 0, i + q, 2)} />))}
      {quarters.map((q) => (
        <g key={q}>
          <path d={seg(0, q, 1, q)} />
          <path d={seg(2, q, 3, q)} />
          <path d={seg(0, 1 + q, 3, 1 + q)} />
          <path d={seg(1, q, 2, q) + seg(1 + q, 0, 1 + q, 1)} stroke="#e08a8a" opacity=".6" />
        </g>
      ))}
    </g>
    <path
      d={seg(0, 0, 3, 0) + seg(0, 1, 3, 1) + seg(0, 2, 3, 2) + seg(1, 0, 1, 2) + seg(2, 0, 2, 2)}
      fill="none"
      stroke="#000"
      strokeWidth="1.100"
    />
    {[[0, 0], [0, 1], [0, 2], [1, 0], [1, 1], [1, 2], [2, 0], [2, 1], [2, 2], [3, 2]].map(([i, j]) => (
      <circle key={`${i}${j}`} cx={pt(i, j)[0]} cy={pt(i, j)[1]} r="2" fill="#8b0a14" />
    ))}

    <Triad x={618} y={135} dir={down} labels={{ x: [652, 155], y: [582, 152], z: [613, 158] }} />
    <Triad x={612} y={198} dir={up} labels={{ x: [647, 219], y: [649, 187], z: [618, 184] }} />
    <Triad x={462} y={259} dir={down} labels={{ y: [426, 277], z: [463, 310] }} />
    <Triad x={601} y={324} dir={up} labels={{ x: [636, 345], y: [638, 314], z: [602, 285] }} />
    <Triad x={751} y={264} dir={down} labels={{ x: [786, 284], y: [715, 283] }} />
    <Triad x={740} y={389} dir={down} labels={{ y: [704, 409], z: [741, 439] }} />

    {/* click flash with the pointer */}
    <path
      d="M792 274L804 268L797 258L808 264L811 257L815 264L831 258L823 268L831 271L823 274L829 279L821 279L822 287L814 281L804 286L806 277Z"
      fill="#f6ad2f"
      stroke="#b8500c"
      strokeWidth=".5"
    />
    <path d="M812.500 269V284L816 281L819 287L821.500 286L819 280H823.500Z" fill="#111" stroke="#fff" />
  </svg>
);

/* ---------- context menu ---------- */

const contextItems = [
  { label: "Fläche bearbeiten...", icon: "editSurf" },
  { label: "Fläche löschen", icon: "delSurf" },
  null,
  { label: "FE-Netzverdichtung", sub: true },
  null,
  { label: "Durchdringung erzeugen", icon: "interNew", off: true },
  { label: "Durchdringung löschen", icon: "interDel", off: true },
  null,
  { label: "Volumenkörper mit Kontakt erzeugen...", icon: "contact", off: true },
  null,
  { label: "Extrudieren", sub: true },
  null,
  { label: "Lokales Achsensystem umkehren", icon: "flip", hot: true },
  { label: "Fläche gleichmäßig teilen...", icon: "divide" },
  null,
  { label: "Schwerpunkt und Infos...", icon: "scales" },
  null,
  { label: "Verschieben/Kopieren...", icon: "moveCopy" },
  { label: "Rotieren...", icon: "rotate" },
  { label: "Spiegeln...", icon: "mirror" },
  null,
  { label: "Lokale Achsensysteme ein/aus", icon: "tick", on: true },
  null,
  { label: "Ergebniswerte", sub: true },
  null,
  { label: "Anzeigeeigenschaften...", icon: "display" },
  null,
  { label: "Sichtbarkeit mittels selektierter Objekte", icon: "scope" },
  { label: "Sichtbarkeit mittels Ausblenden von selektierten Objekten", icon: "scopeDel" },
];

const ContextMenu = () => (
  <div
    role="menu"
    className="absolute left-[456px] top-[201px] w-[381px] py-0.5 border border-[#85888e] rounded-[2px] shadow-[2px_2px_3px_rgba(0,0,0,0.3)] bg-linear-to-r from-[#e9eef7] from-[25px] via-[#c5c8ce] via-[25px] to-[#fafafa] to-[26px] text-[11px] text-[#45464f]"
  >
    {contextItems.map((item, i) =>
      item ? (
        <button
          key={i}
          type="button"
          role="menuitem"
          disabled={item.off}
          className={`w-full h-[22px] flex items-center text-left relative disabled:text-[#a2a3a8] ${
            item.hot ? "inset-ring inset-ring-[#e8cf86] bg-linear-to-b from-[#fffbe6] from-10% via-[#ffeaa0] via-45% to-[#ffd648] to-55%" : ""
          }`}
        >
          <span
            className={`w-5 h-5 mx-[3px] shrink-0 flex items-center justify-center ${
              item.on ? "border border-[#f0983c] rounded-[2px] bg-[#ffdf94]" : ""
            }`}
          >
            {item.icon && <Icon name={item.icon} />}
          </span>
          <span className="flex-1 ml-[5px] whitespace-nowrap">{item.label}</span>
          {item.sub && <span className="mr-[5px] border-y-4 border-l-4 border-y-transparent border-l-[#3c3d44]" />}
          {item.hot && (
            <span className="absolute -left-1 -top-px w-[210px] h-[25px] border-3 border-[#ea4f48] shadow-[1px_2px_3px_rgba(0,0,0,0.2)]" />
          )}
        </button>
      ) : (
        <div key={i} role="separator" className="h-2 ml-8 mr-px flex items-center">
          <span className="flex-1 h-px bg-[#bfc0c4]" />
        </div>
      )
    )}
  </div>
);

export default function App() {
  return (
    <div className="h-screen flex flex-col overflow-hidden relative bg-white font-['Open_Sans','Noto_Sans',sans-serif]">
      <header className="h-[23px] shrink-0 flex items-center pl-0.5 bg-white text-[11px] text-black">
        <Logo />
        <h1 className="ml-0.5">RFEM 5.24.02 x64 - [Modell Flächenachsen*]</h1>
      </header>

      <MenuBar />

      <Bar>
        <Tools items={row1a} />
        <div className="w-[220px] shrink-0 px-0.5 grid items-center">
          <select
            aria-label="Lastfall"
            className="appearance-none h-[18px] w-full px-1 bg-white text-[11px] text-black [grid-area:1/1]"
          >
            <option>LF1</option>
          </select>
          <span className="w-3.5 h-4 mr-px justify-self-end flex items-center justify-center bg-[#dde3ec] [grid-area:1/1] pointer-events-none">
            <span className="border-x-3 border-t-3 border-x-transparent border-t-[#6d7280]" />
          </span>
        </div>
        <Tools items={row1b} />
      </Bar>

      <Bar>
        <Tools items={row2} />
      </Bar>

      <div className="flex-1 min-h-0 flex">
        <Navigator />
        <div className="w-1 shrink-0 bg-[#d0d5df]" />
        <main className="flex-1 min-w-0 relative border-l-2 border-t-2 border-[#66686e] bg-white">
          <div className="absolute inset-0 overflow-hidden">
            <ModelView />
          </div>
          <p className="absolute left-[5px] top-[5px] text-[11px] leading-[14px] text-black font-['Liberation_Sans',sans-serif]">
            Grundschnittgrößen m-x [kNm/m]
            <br />
            LF1
          </p>
          <ContextMenu />
        </main>
      </div>

      {/* pointer arrow from the tree entry to the surface */}
      <svg viewBox="270 210 165 60" className="absolute left-[270px] top-[210px] w-[165px] h-[60px] pointer-events-none drop-shadow-[2px_4px_3px_rgba(0,0,0,0.5)]">
        <path d="M277 217.500L412 252" stroke="#ea4f48" strokeWidth="4" strokeLinecap="round" />
        <path d="M424 256L410 259L413 244Z" fill="#ea4f48" />
      </svg>
    </div>
  );
}
